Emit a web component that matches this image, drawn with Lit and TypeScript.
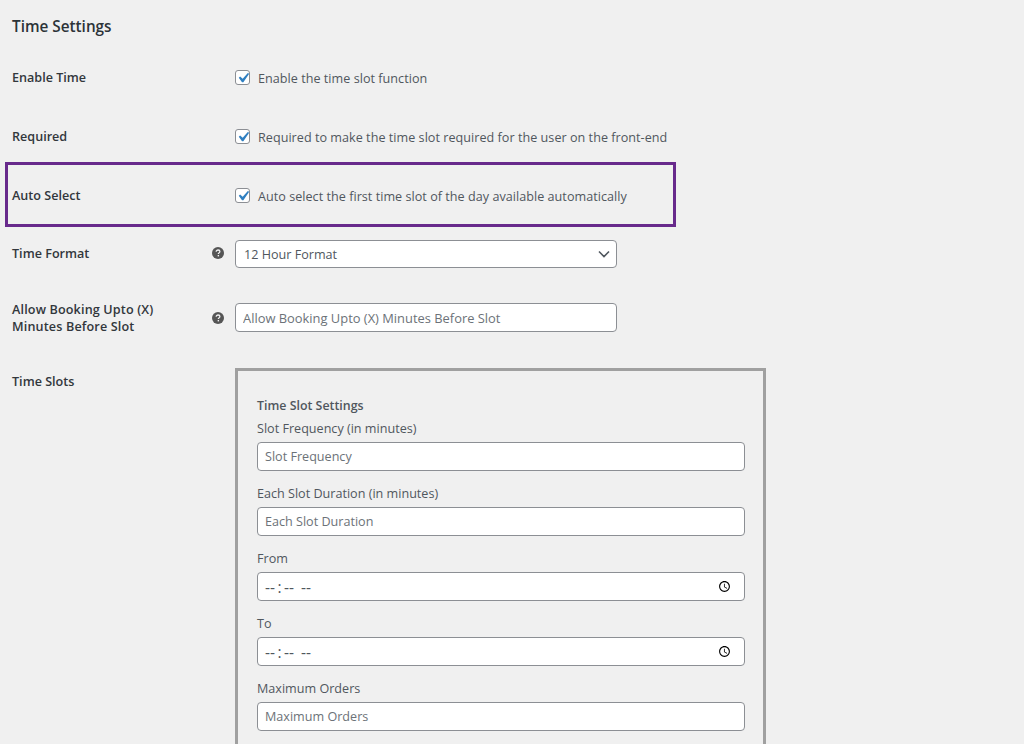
import { LitElement, css, html } from 'lit';
import { customElement } from 'lit/decorators.js';

const checkbox = html`
  <span class="check">
    <svg viewBox="0 0 20 20" width="20" height="20">
      <path d="M14.83 4.89l1.34.94-5.81 8.38H9.02L5.78 9.67l1.34-1.25 2.57 2.4z" fill="#2f7fc1"></path>
    </svg>
  </span>
`;

const help = html`
  <svg class="help" viewBox="0 0 12 12" width="12" height="12">
    <circle cx="6" cy="6" r="6" fill="#555"></circle>
    <path d="M4.2 4.7c0-1.1.8-1.7 1.9-1.7s1.8.6 1.8 1.5c0 .7-.4 1.1-1 1.5-.4.2-.5.4-.5.8v.2"
      fill="none" stroke="#f0f0f0" stroke-width="1.3"></path>
    <rect x="5.65" y="8" width="1.4" height="1.4" fill="#f0f0f0"></rect>
  </svg>
`;

@customElement('app-root')
export class AppRoot extends LitElement {
  static override styles = css`
    :host {
      display: block;
      height: 744px;
      overflow: hidden;
      position: relative;
      background: #f0f0f0;
      color: #50575e;
      font-family: 'Open Sans', 'Noto Sans', sans-serif;
      font-size: 12.6px;
    }

    h2 {
      margin: 0;
      padding: 16px 0 0 12px;
      height: 61px;
      box-sizing: border-box;
      font-size: 15.3px;
      line-height: 20px;
      font-weight: 600;
      color: #2c3338;
    }

    .row {
      display: grid;
      grid-template-columns: 200px 23px 1fr;
      padding-left: 12px;
    }

    .label {
      font-weight: 600;
      color: #32373c;
      font-size: 12.6px;
      line-height: 17px;
    }

    .r-check { height: 59px; }
    .r-check .label { padding-top: 8px; }
    .r-format { height: 63px; margin-top: 2px; }
    .r-format .label { padding-top: 5px; }
    .r-allow { height: 65px; }
    .r-allow .label {
      margin-top: -2px;
      letter-spacing: 0.15px;
    }
    .r-slots { align-items: start; }
    .r-slots .label { padding-top: 5px; }

    .help { margin: 7px 0 0; }
    .r-allow .help { margin-top: 9px; }

    .option {
      display: flex;
      align-items: center;
      gap: 8px;
      padding-top: 8px;
      height: 17px;
      line-height: 17px;
    }

    .option span:last-child {
      margin-top: 2px;
      letter-spacing: 0.03px;
    }

    .check {
      box-sizing: border-box;
      width: 15px;
      height: 15px;
      flex: none;
      display: flex;
      align-items: center;
      justify-content: center;
      background: #fff;
      border: 1px solid #8c8f94;
      border-radius: 3px;
    }

    .check svg {
      flex: none;
      margin: -3px;
    }

    .select-wrap {
      position: relative;
      width: 382px;
      height: 28px;
    }

    .select-wrap svg {
      position: absolute;
      right: 7px;
      top: 9px;
      pointer-events: none;
    }

    select,
    input {
      display: block;
      box-sizing: border-box;
      height: 29px;
      margin: 0;
      padding: 0 7px;
      background: #fff;
      border: 1px solid #8c8f94;
      border-radius: 4px;
      color: #50575e;
      font: inherit;
      font-size: 12.6px;
      outline: none;
    }

    select {
      appearance: none;
      width: 100%;
      height: 28px;
      padding: 0 8px;
    }

    .wide {
      width: 382px;
      font-size: 12.9px;
    }

    input::placeholder {
      color: #6c7278;
      opacity: 1;
    }

    input[type='time'] {
      padding-right: 10px;
    }

    input[type='time']::-webkit-datetime-edit {
      margin-left: -1px;
      font-size: 15.5px;
    }

    input[type='time']::-webkit-datetime-edit-text {
      padding: 0 1.5px;
    }

    .slots {
      box-sizing: border-box;
      width: 531px;
      height: 500px;
      padding: 26px 19px 0;
      border: 3px solid #a0a0a0;
      border-bottom: none;
    }

    .slots h3 {
      margin: 0;
      font-size: 12.4px;
      line-height: 17px;
      font-weight: 600;
      color: #50575e;
    }

    .field label {
      display: block;
      height: 15px;
      line-height: 15px;
    }

    .field input {
      width: 488px;
      margin-top: 6px;
    }

    .field + .field { margin-top: 15px; }
    .first { margin-top: 7px; }

    .highlight {
      position: absolute;
      left: 5px;
      top: 162px;
      width: 671px;
      height: 65px;
      box-sizing: border-box;
      border: 3px solid #682a8c;
      pointer-events: none;
    }
  `;

  override render() {
    return html`
      <h2>Time Settings</h2>

      <div class="row r-check">
        <div class="label">Enable Time</div><span></span>
        <div class="option">${checkbox}<span>Enable the time slot function</span></div>
      </div>
      <div class="row r-check">
        <div class="label">Required</div><span></span>
        <div class="option">${checkbox}<span>Required to make the time slot required for the user on the front-end</span></div>
      </div>
      <div class="row r-check">
        <div class="label">Auto Select</div><span></span>
        <div class="option">${checkbox}<span>Auto select the first time slot of the day available automatically</span></div>
      </div>

      <div class="row r-format">
        <div class="label">Time Format</div>
        ${help}
        <div class="select-wrap">
          <select>
            <option>12 Hour Format</option>
            <option>24 Hour Format</option>
          </select>
          <svg viewBox="0 0 12 10" width="12" height="10">
            <path d="M1 2.5l5 5 5-5" fill="none" stroke="#50575e" stroke-width="1.6"></path>
          </svg>
        </div>
      </div>

      <div class="row r-allow">
        <div class="label">Allow Booking Upto (X)<br />Minutes Before Slot</div>
        ${help}
        <input class="wide" placeholder="Allow Booking Upto (X) Minutes Before Slot" />
      </div>

      <div class="row r-slots">
        <div class="label">Time Slots</div><span></span>
        <div class="slots">
          <h3>Time Slot Settings</h3>
          <div class="field first">
            <label>Slot Frequency (in minutes)</label>
            <input placeholder="Slot Frequency" />
          </div>
          <div class="field">
            <label>Each Slot Duration (in minutes)</label>
            <input placeholder="Each Slot Duration" />
          </div>
          <div class="field">
            <label>From</label>
            <input type="time" />
          </div>
          <div class="field">
            <label>To</label>
            <input type="time" />
          </div>
          <div class="field">
            <label>Maximum Orders</label>
            <input placeholder="Maximum Orders" />
          </div>
        </div>
      </div>

      <div class="highlight"></div>
    `;
  }
}

declare global {
  interface HTMLElementTagNameMap {
    'app-root': AppRoot;
  }
}
